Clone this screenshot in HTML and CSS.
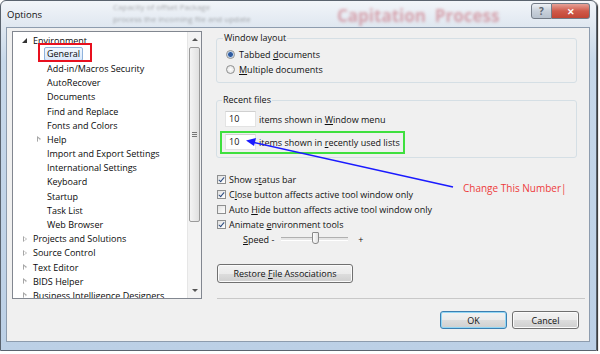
FILE: index.html
```html
<!DOCTYPE html>
<html lang="en">
<head>
  <meta charset="UTF-8">
  <title>Options</title>
  <link rel="stylesheet" href="styles.css">
</head>
<body>
  <div class="window">
    <div class="titlebar">
      <span class="title">Options</span>
      <div class="ghost">
        <span class="ghost-line g1">Capacity of offset Package</span>
        <span class="ghost-line g2">process the incoming file and update</span>
        <span class="ghost-red">Capitation&nbsp; Process</span>
      </div>
      <div class="caption-btns">
        <span class="cap help">?</span>
        <span class="cap close">&#10005;</span>
      </div>
    </div>

    <div class="client">
      <div class="tree">
        <ul class="tree-list">
          <li class="lv0"><i class="tw open"></i>Environment</li>
          <li class="lv1"><i class="tw"></i><span class="sel">General</span></li>
          <li class="lv1"><i class="tw"></i>Add-in/Macros Security</li>
          <li class="lv1"><i class="tw"></i>AutoRecover</li>
          <li class="lv1"><i class="tw"></i>Documents</li>
          <li class="lv1"><i class="tw"></i>Find and Replace</li>
          <li class="lv1"><i class="tw"></i>Fonts and Colors</li>
          <li class="lv1"><i class="tw shut"></i>Help</li>
          <li class="lv1"><i class="tw"></i>Import and Export Settings</li>
          <li class="lv1"><i class="tw"></i>International Settings</li>
          <li class="lv1"><i class="tw"></i>Keyboard</li>
          <li class="lv1"><i class="tw"></i>Startup</li>
          <li class="lv1"><i class="tw"></i>Task List</li>
          <li class="lv1"><i class="tw"></i>Web Browser</li>
          <li class="lv0"><i class="tw shut"></i>Projects and Solutions</li>
          <li class="lv0"><i class="tw shut"></i>Source Control</li>
          <li class="lv0"><i class="tw shut"></i>Text Editor</li>
          <li class="lv0"><i class="tw shut"></i>BIDS Helper</li>
          <li class="lv0"><i class="tw shut"></i>Business Intelligence Designers</li>
        </ul>
        <div class="vscroll">
          <span class="arr up"></span>
          <div class="track"><div class="thumb"><span class="grip"></span></div></div>
          <span class="arr down"></span>
        </div>
      </div>

      <div class="pane">
        <fieldset class="group layout">
          <legend>Window layout</legend>
          <div class="opt"><span class="radio on"></span><span>Tabbed <u>d</u>ocuments</span></div>
          <div class="opt"><span class="radio"></span><span><u>M</u>ultiple documents</span></div>
        </fieldset>

        <fieldset class="group recent">
          <legend>Recent files</legend>
          <div class="numrow"><span class="num">10</span><span>items shown in <u>W</u>indow menu</span></div>
          <div class="numrow"><span class="num">10</span><span>items shown in <u>r</u>ecently used lists</span></div>
        </fieldset>

        <div class="checks">
          <div class="opt"><span class="check on"></span><span>Show s<u>t</u>atus bar</span></div>
          <div class="opt"><span class="check on"></span><span>C<u>l</u>ose button affects active tool window only</span></div>
          <div class="opt"><span class="check"></span><span>Auto <u>H</u>ide button affects active tool window only</span></div>
          <div class="opt"><span class="check on"></span><span>Animate <u>e</u>nvironment tools</span></div>
          <div class="speed">
            <span><u>S</u>peed -</span>
            <span class="slider"><span class="knob"></span></span>
            <span>+</span>
          </div>
        </div>

        <button class="btn restore">Restore <u>F</u>ile Associations</button>
      </div>

      <div class="footer">
        <button class="btn ok">OK</button>
        <button class="btn">Cancel</button>
      </div>
    </div>

    <!-- annotations drawn over the screenshot -->
    <span class="mark red-box"></span>
    <span class="mark green-box"></span>
    <svg class="arrow" width="600" height="354" viewBox="0 0 600 354">
      <line x1="252" y1="142" x2="453" y2="187" stroke="#1a1aff" stroke-width="1.6"/>
      <polygon points="246,140.5 256,138 254,146" fill="#1a1aff"/>
    </svg>
    <span class="note">Change This Number|</span>
  </div>
</body>
</html>
```

FILE: styles.css
```css
/* General Styles */
body {
  margin: 0;
  background: #fff;
  font-family: "Open Sans", "Noto Sans", sans-serif;
  font-size: 9px;
  color: #111;
}

.window {
  position: relative;
  width: 597px;
  height: 351px;
  box-sizing: border-box;
  border: 1px solid #5a636e;
  border-radius: 6px 6px 0 0;
  background: linear-gradient(#f2f5f9, #dfe7f0 26px, #c7d8ea 60px, #bcd0e6);
  box-shadow: 1px 1px 1px #2b2b2b;
  display: flex;
  flex-direction: column;
}

/* Title bar */
.titlebar {
  position: relative;
  height: 26px;
  display: flex;
  align-items: center;
  padding-left: 6px;
}

.title {
  position: relative;
  z-index: 1;
  font-size: 9.5px;
  color: #111;
  margin-top: 1px;
}

.ghost {
  position: absolute;
  inset: 0;
  overflow: hidden;
}

.ghost-line {
  position: absolute;
  left: 112px;
  font-size: 8px;
  line-height: 10px;
  color: #555;
  filter: blur(1px);
  opacity: 0.45;
}

.g1 { top: 1px; }
.g2 { top: 13px; }

.ghost-red {
  position: absolute;
  left: 336px;
  top: 3px;
  font-size: 17px;
  font-weight: bold;
  color: #c45a68;
  opacity: 0.5;
  filter: blur(1.4px);
}

.caption-btns {
  position: absolute;
  right: 6px;
  top: 2px;
  display: flex;
}

.cap {
  height: 14px;
  display: flex;
  align-items: center;
  justify-content: center;
  color: #fff;
  font-weight: bold;
  border: 1px solid #737b86;
}

.help {
  width: 19px;
  border-radius: 3px 0 0 3px;
  background: linear-gradient(#eef1f5, #c8d0da 50%, #b7c1cd);
  color: #5d6670;
  font-size: 10px;
}

.close {
  width: 37px;
  border-left: none;
  border-radius: 0 3px 3px 0;
  background: linear-gradient(#e6a197, #cf5a4a 50%, #c24534);
  font-size: 9px;
}

/* Client area */
.client {
  margin: 0 0 0 5px;
  width: 584px;
  height: 315px;
  box-sizing: border-box;
  border: 1px solid #8d9cae;
  background: #f0f0f0;
  padding: 3px 0 0 5px;
  display: grid;
  grid-template-columns: 190px 369px;
  grid-template-rows: 268px auto;
  column-gap: 14px;
}

/* Tree */
.tree {
  box-sizing: border-box;
  border: 1px solid #828790;
  background: #fff;
  display: flex;
  overflow: hidden;
}

.tree-list {
  flex: 1;
  list-style: none;
  margin: 0;
  padding: 1px 0 0;
}

.tree-list li {
  height: 14.2px;
  display: flex;
  align-items: center;
  white-space: nowrap;
  color: #0a0a0a;
}

.tree-list .lv0 { padding-left: 9px; }
.tree-list .lv1 { padding-left: 23px; }

.tw {
  width: 11px;
  flex: none;
  position: relative;
  height: 14px;
}

.tw.open::before {
  content: "";
  position: absolute;
  left: 0;
  top: 5px;
  border-left: 5px solid transparent;
  border-bottom: 5px solid #333;
}

.tw.shut::before {
  content: "";
  position: absolute;
  left: 1px;
  top: 4px;
  border-top: 3.5px solid transparent;
  border-bottom: 3.5px solid transparent;
  border-left: 4px solid #a6a6a6;
}

.tw.shut::after {
  content: "";
  position: absolute;
  left: 2px;
  top: 5.5px;
  border-top: 2px solid transparent;
  border-bottom: 2px solid transparent;
  border-left: 2px solid #fff;
}

.sel {
  margin-left: -3px;
  padding: 0 2px;
  line-height: 12px;
  border: 1px solid #8fb2dc;
  border-radius: 2px;
  background: linear-gradient(#f1f7fe, #d9e8fb);
}

.vscroll {
  width: 13px;
  flex: none;
  background: #f3f3f3;
  border-left: 1px solid #e6e6e6;
  display: flex;
  flex-direction: column;
  align-items: center;
}

.arr {
  height: 15px;
  flex: none;
  display: flex;
  align-items: center;
}

.arr::before {
  content: "";
  border-left: 3px solid transparent;
  border-right: 3px solid transparent;
}

.arr.up::before { border-bottom: 3px solid #555; }
.arr.down::before { border-top: 3px solid #555; }

.track {
  flex: 1;
  width: 100%;
}

.thumb {
  margin: 0 1px;
  height: 175px;
  box-sizing: border-box;
  border: 1px solid #9b9b9b;
  border-radius: 2px;
  background: linear-gradient(90deg, #f4f4f4, #e0e0e0);
  display: flex;
  align-items: center;
  justify-content: center;
}

.grip {
  width: 5px;
  height: 5px;
  background: repeating-linear-gradient(#777 0 1px, transparent 1px 2px);
}

/* Right pane */
.pane {
  display: flex;
  flex-direction: column;
  align-items: flex-start;
}

.group {
  width: 361px;
  box-sizing: border-box;
  margin: 0;
  border: 1px solid #d5dfe5;
  border-radius: 3px;
  padding: 2px 0 5px 9px;
}

.group legend {
  padding: 0 1px;
  margin-left: -3px;
  line-height: 14px;
  color: #111;
}

.recent {
  margin-top: 10px;
  padding: 4px 0 7px 8px;
}

.opt {
  height: 15px;
  display: flex;
  align-items: center;
  white-space: nowrap;
}

.radio {
  width: 9px;
  height: 9px;
  box-sizing: border-box;
  border-radius: 50%;
  border: 1px solid #8e8f8f;
  background: radial-gradient(#fff, #dcdcdc);
  margin-right: 4px;
}

.radio.on {
  background: radial-gradient(circle, #2f5a9e 0 2px, #8cb0dc 2.5px, #f4f4f4 3.5px);
}

.numrow {
  height: 16px;
  display: flex;
  align-items: center;
  white-space: nowrap;
}

.numrow + .numrow { margin-top: 7px; }

.num {
  width: 31px;
  height: 16px;
  box-sizing: border-box;
  border: 1px solid #e3e3e3;
  border-top-color: #d0d0d0;
  background: #fff;
  padding-left: 3px;
  line-height: 14px;
  margin-right: 3px;
}

.checks {
  margin-top: 14px;
  padding-left: 1px;
}

.check {
  width: 9px;
  height: 9px;
  box-sizing: border-box;
  border: 1px solid #8e8f8f;
  background: linear-gradient(135deg, #e1e1e1, #fff);
  margin-right: 3px;
  position: relative;
}

.check.on::after {
  content: "";
  position: absolute;
  left: 2px;
  top: 0;
  width: 2px;
  height: 5px;
  border: solid #2a4a80;
  border-width: 0 1.5px 1.5px 0;
  transform: rotate(40deg);
}

.speed {
  height: 14px;
  display: flex;
  align-items: center;
  padding-left: 26px;
}

.slider {
  position: relative;
  width: 67px;
  height: 2px;
  margin: 0 10px 0 7px;
  border-top: 1px solid #b0b0b0;
  border-bottom: 1px solid #fff;
  background: #e6e6e6;
}

.knob {
  position: absolute;
  left: 31px;
  top: -6px;
  width: 5px;
  height: 10px;
  border: 1px solid #8a8a8a;
  border-radius: 1px 1px 3px 3px;
  background: linear-gradient(90deg, #fdfdfd, #e2e2e2);
}

.btn {
  font-family: inherit;
  font-size: 9px;
  color: #111;
  height: 19px;
  padding: 0;
  border: 1px solid #707070;
  border-radius: 3px;
  background: linear-gradient(#f2f2f2, #ebebeb 50%, #dddddd 51%, #cfcfcf);
  box-shadow: inset 0 0 0 1px #fbfbfb;
}

.restore {
  width: 136px;
  margin: 18px 0 0 1px;
}

.footer {
  grid-column: 2;
  margin-top: -1px;
  border-top: 1px solid #c8c8c8;
  margin-left: 1px;
  display: flex;
  justify-content: flex-end;
  gap: 5px;
  padding: 12px 6px 0 0;
}

.footer .btn {
  width: 67px;
  height: 18px;
}

.footer .ok {
  border-color: #3c7fb1;
  box-shadow: inset 0 0 0 1px #93d7f5;
}

/* Annotations */
.mark {
  position: absolute;
  box-sizing: border-box;
  border: 2px solid;
}

.red-box {
  left: 37px;
  top: 42px;
  width: 54px;
  height: 19px;
  border-color: #e8101e;
}

.green-box {
  left: 219px;
  top: 130px;
  width: 185px;
  height: 23px;
  border-color: #3fe03f;
}

.arrow {
  position: absolute;
  left: -1px;
  top: -1px;
  pointer-events: none;
}

.note {
  position: absolute;
  left: 462px;
  top: 180px;
  font-size: 10px;
  color: #ee3b3b;
  white-space: nowrap;
}
```
